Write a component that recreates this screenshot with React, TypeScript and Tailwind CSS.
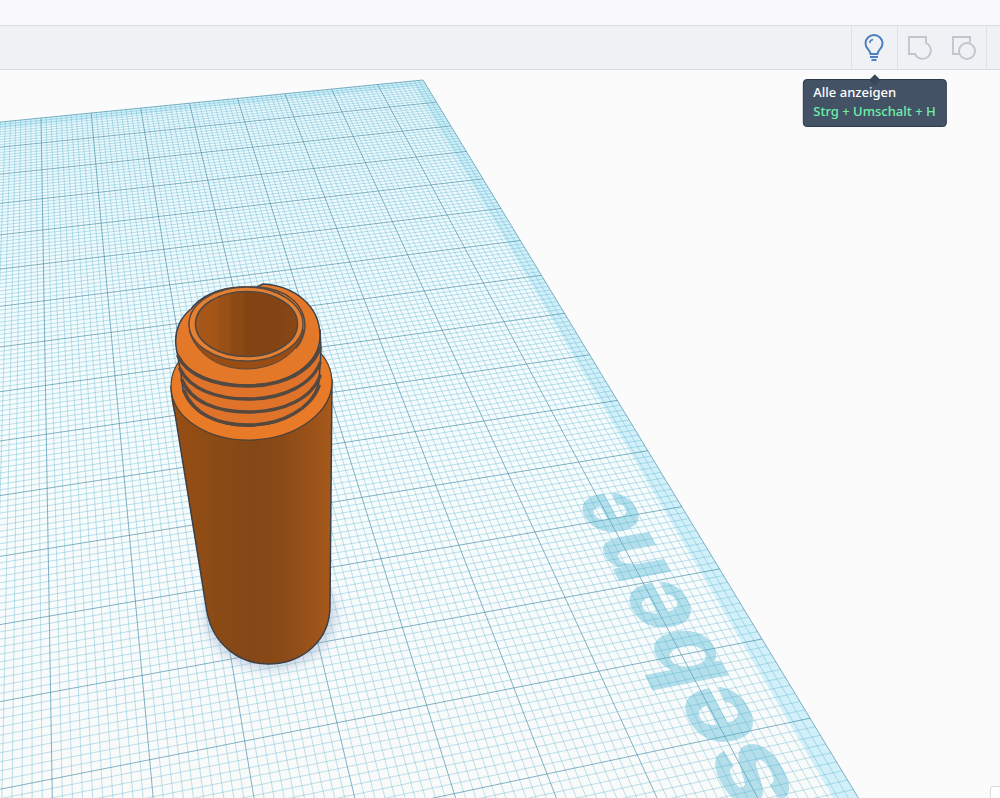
type Point = [number, number];

// corners of the visible 8 x 14 block of grid cells, in scene pixels
const COLS = 8;
const ROWS = 14;
const BACK_RIGHT: Point = [423, 10];
const BACK_LEFT: Point = [41, 48];
const FRONT_LEFT: Point = [52, 709];
const FRONT_RIGHT: Point = [762, 569];

// the plane keeps going past the visible block
const MAX_COL = 10;
const MAX_ROW = 18;

function planeMatrix() {
  const [x0, y0] = BACK_RIGHT;
  const [x1, y1] = BACK_LEFT;
  const [x2, y2] = FRONT_LEFT;
  const [x3, y3] = FRONT_RIGHT;
  const ax = x1 - x2;
  const ay = y1 - y2;
  const bx = x3 - x2;
  const by = y3 - y2;
  const sx = x0 - x1 + x2 - x3;
  const sy = y0 - y1 + y2 - y3;
  const det = ax * by - bx * ay;
  const g = (sx * by - bx * sy) / det;
  const h = (ax * sy - sx * ay) / det;
  return [
    [(x1 - x0 + g * x1) / COLS, (x3 - x0 + h * x3) / ROWS, x0],
    [(y1 - y0 + g * y1) / COLS, (y3 - y0 + h * y3) / ROWS, y0],
    [g / COLS, h / ROWS, 1],
  ];
}

const M = planeMatrix();

function project(u: number, v: number) {
  const [x, y, w] = M.map((r) => r[0] * u + r[1] * v + r[2]);
  return `${(x / w).toFixed(2)} ${(y / w).toFixed(2)}`;
}

function polygon(points: Point[]) {
  return `M${points.map(([u, v]) => project(u, v)).join("L")}Z`;
}

function gridPath(major: boolean) {
  let d = "";
  for (let i = 0; i <= MAX_COL * 10; i++) {
    if ((i % 10 === 0) !== major) continue;
    d += `M${project(i / 10, 0)}L${project(i / 10, MAX_ROW)}`;
  }
  for (let i = 0; i <= MAX_ROW * 10; i++) {
    if ((i % 10 === 0) !== major) continue;
    d += `M${project(0, i / 10)}L${project(MAX_COL, i / 10)}`;
  }
  return d;
}

// puts a flat element on the plane, 80px per cell, reading towards the back
function labelTransform(baseline: number, start: number) {
  const cell = 80;
  const top = baseline + 85 / cell;
  const [x, y, w] = M.map(([a, b, c]) => [
    -b / cell,
    -a / cell,
    a * top + b * start + c,
  ]);
  return `matrix3d(${[
    x[0], y[0], 0, w[0],
    x[1], y[1], 0, w[1],
    0, 0, 1, 0,
    x[2], y[2], 0, w[2],
  ].join(",")})`;
}

function Workplane() {
  const band = 0.25;
  return (
    <g>
      <defs>
        <linearGradient id="plane" x1="0" y1="0" x2="0" y2="728" gradientUnits="userSpaceOnUse">
          <stop offset="0" stopColor="#eaf9fd" />
          <stop offset="0.5" stopColor="#f6fcfd" />
          <stop offset="1" stopColor="#f9fafa" />
        </linearGradient>
      </defs>
      <path
        d={polygon([[0, 0], [MAX_COL, 0], [MAX_COL, MAX_ROW], [0, MAX_ROW]])}
        fill="url(#plane)"
      />
      <path
        d={polygon([
          [0, 0],
          [MAX_COL, 0],
          [MAX_COL, band],
          [band, band],
          [band, MAX_ROW],
          [0, MAX_ROW],
        ])}
        fill="#d2f0f9"
      />
      <path d={gridPath(false)} stroke="#48a9c8" strokeOpacity="0.38" strokeWidth="0.9" fill="none" />
      <path d={gridPath(true)} stroke="#33829f" strokeOpacity="0.6" strokeWidth="1" fill="none" />
    </g>
  );
}

function Bottle() {
  return (
    <g transform="translate(0 -70)" strokeLinejoin="round" strokeLinecap="round">
      <defs>
        <linearGradient id="body" x1="172" y1="0" x2="332" y2="0" gradientUnits="userSpaceOnUse">
          <stop offset="0" stopColor="#984f14" />
          <stop offset="0.3" stopColor="#8a4a16" />
          <stop offset="0.5" stopColor="#844717" />
          <stop offset="0.7" stopColor="#8a4a17" />
          <stop offset="1" stopColor="#a7591b" />
        </linearGradient>
        <linearGradient id="hole" x1="195" y1="0" x2="298" y2="0" gradientUnits="userSpaceOnUse">
          <stop offset="0" stopColor="#a9581a" />
          <stop offset="0.22" stopColor="#a35518" />
          <stop offset="0.22" stopColor="#9b5117" />
          <stop offset="0.34" stopColor="#985016" />
          <stop offset="0.34" stopColor="#8f4a15" />
          <stop offset="0.48" stopColor="#8b4815" />
          <stop offset="0.48" stopColor="#854414" />
          <stop offset="0.8" stopColor="#834314" />
          <stop offset="1" stopColor="#8c4815" />
        </linearGradient>
        <filter id="soft" x="-20%" y="-20%" width="140%" height="140%">
          <feGaussianBlur stdDeviation="5" />
        </filter>
      </defs>
      <ellipse cx="270" cy="614" rx="66" ry="56" fill="#8fa6c4" fillOpacity="0.4" filter="url(#soft)" />

      {/* body and shoulder */}
      <path
        d="M171 386C171 396 173 404 175 414L207 612C213 645 240 664 268 664C303 664 330 640 330 606L332 380Z"
        fill="url(#body)"
        stroke="#3b3f4a"
        strokeWidth="1.5"
      />
      <ellipse
        cx="251.5"
        cy="384"
        rx="80.5"
        ry="56"
        transform="rotate(-3 251.5 384)"
        fill="#e87a28"
        stroke="#4b4238"
        strokeWidth="1.2"
      />

      {/* threaded neck */}
      <path
        d="M176 340L178 358L181 374L183 390C190 412 216 426 248 426C284 426 312 408 319 382L320 366L321 350L320 330Z"
        fill="#df732a"
        stroke="#3b4250"
        strokeWidth="1.5"
      />
      <path
        d="M176 346C174 330 181 317 191 309C201 296 219 288 240 287L257 287L263 284C295 286 320 306 320 336C320 364 289 385 248 385C207 385 177 368 176 346Z"
        fill="#e37829"
        stroke="#3b4250"
        strokeWidth="1.5"
      />
      <g fill="none" stroke="#54483f" strokeWidth="3.4">
        <path d="M178 356C188 376 214 386 247 386C284 386 312 371 320 348" />
        <path d="M180 369C190 389 216 399 248 399C284 399 312 384 320 363" />
        <path d="M182 380C191 402 217 412 248 412C284 412 312 398 320 376" />
        <path d="M184 391C194 415 219 425 248 425C283 425 311 408 319 386" />
      </g>

      {/* lip */}
      <path
        d="M189 322L190 333C197 355 220 369 246 369C274 369 299 354 304 330Z"
        fill="#974d14"
        stroke="#54483f"
      />
      <path d="M258 287C285 289 305 303 305 327C304 337 301 343 296 348" fill="none" stroke="#54483f" strokeWidth="1.5" />
      <ellipse cx="246" cy="324" rx="57" ry="37" fill="#e58033" stroke="#54483f" strokeWidth="1.4" />
      <ellipse cx="246.5" cy="324" rx="51" ry="32.5" fill="url(#hole)" stroke="#54483f" strokeWidth="1.6" />
    </g>
  );
}

function BulbIcon() {
  return (
    <svg width="20" height="28" viewBox="0 0 20 28" fill="none" stroke="#4a80c2" strokeWidth="2">
      <path d="M6.5 20C6.5 16 1.5 15 1.5 9.5A8.5 8.5 0 0 1 18.5 9.5C18.5 15 13.5 16 13.5 20Z" />
      <path d="M5.5 9A4.5 4.5 0 0 1 9 5.5" strokeWidth="1.4" />
      <path d="M6 23H14M7.5 26H12.5" strokeWidth="1.8" />
    </svg>
  );
}

function GroupIcon() {
  return (
    <svg width="24" height="24" viewBox="0 0 24 24" fill="none" stroke="#bfc6cd" strokeWidth="1.9">
      <path d="M1 1H18V7A8.3 8.3 0 1 1 7 18H1Z" />
    </svg>
  );
}

function UngroupIcon() {
  return (
    <svg width="24" height="24" viewBox="0 0 24 24" fill="none" stroke="#bfc6cd" strokeWidth="1.9">
      <path d="M7 18H1V1H18V6.5" />
      <circle cx="15" cy="15" r="8" />
    </svg>
  );
}

function Toolbar() {
  return (
    <div className="flex h-[45px] justify-end border-y border-[#dadce1] bg-[#f0f1f4] pr-[13px]">
      <div className="relative z-10 flex border-l border-[#dfe1e6]">
        <button
          aria-label="Alle anzeigen"
          aria-describedby="show-all-tip"
          className="flex w-[45px] items-center justify-center pr-px"
        >
          <BulbIcon />
        </button>
        <div
          id="show-all-tip"
          role="tooltip"
          className="absolute top-[53px] left-1/2 -translate-x-1/2 rounded border border-[#2e3a4b] bg-[#445266] px-[10px] pt-[3px] pb-[5px] text-[13px] leading-[19px] font-medium whitespace-nowrap"
        >
          <span className="absolute -top-1 left-1/2 size-2 -translate-x-1/2 rotate-45 bg-[#3a475a]" />
          <p className="text-white">Alle anzeigen</p>
          <p className="text-[#6ff0a8]">Strg + Umschalt + H</p>
        </div>
      </div>
      <div className="flex border-x border-[#dfe1e6]">
        <button aria-label="Gruppieren" className="flex w-[44px] items-center justify-center">
          <GroupIcon />
        </button>
        <button aria-label="Gruppierung aufheben" className="flex w-[44px] items-center justify-center">
          <UngroupIcon />
        </button>
      </div>
    </div>
  );
}

export default function App() {
  return (
    <div className="flex h-screen flex-col overflow-hidden bg-[#fbfbfb] font-['Noto_Sans',sans-serif]">
      <header>
        <div className="h-[25px] bg-[#f9f9fc]" />
        <Toolbar />
      </header>
      <main className="relative flex-1 overflow-hidden">
        <svg className="h-full w-full">
          <Workplane />
          <Bottle />
        </svg>
        <span
          className="absolute top-0 left-0 origin-top-left font-['Liberation_Sans',sans-serif] text-[98px] leading-[100px] font-bold text-[#4bb4d2] opacity-40 [-webkit-text-stroke:2px_#4bb4d2]"
          style={{ transform: labelTransform(0.6, 15.78) }}
        >
          sebene
        </span>
        <div className="absolute right-0 bottom-0 h-3 w-[10px] rounded-tl border-t border-l border-[#dcdcdc] bg-white" />
      </main>
    </div>
  );
}
